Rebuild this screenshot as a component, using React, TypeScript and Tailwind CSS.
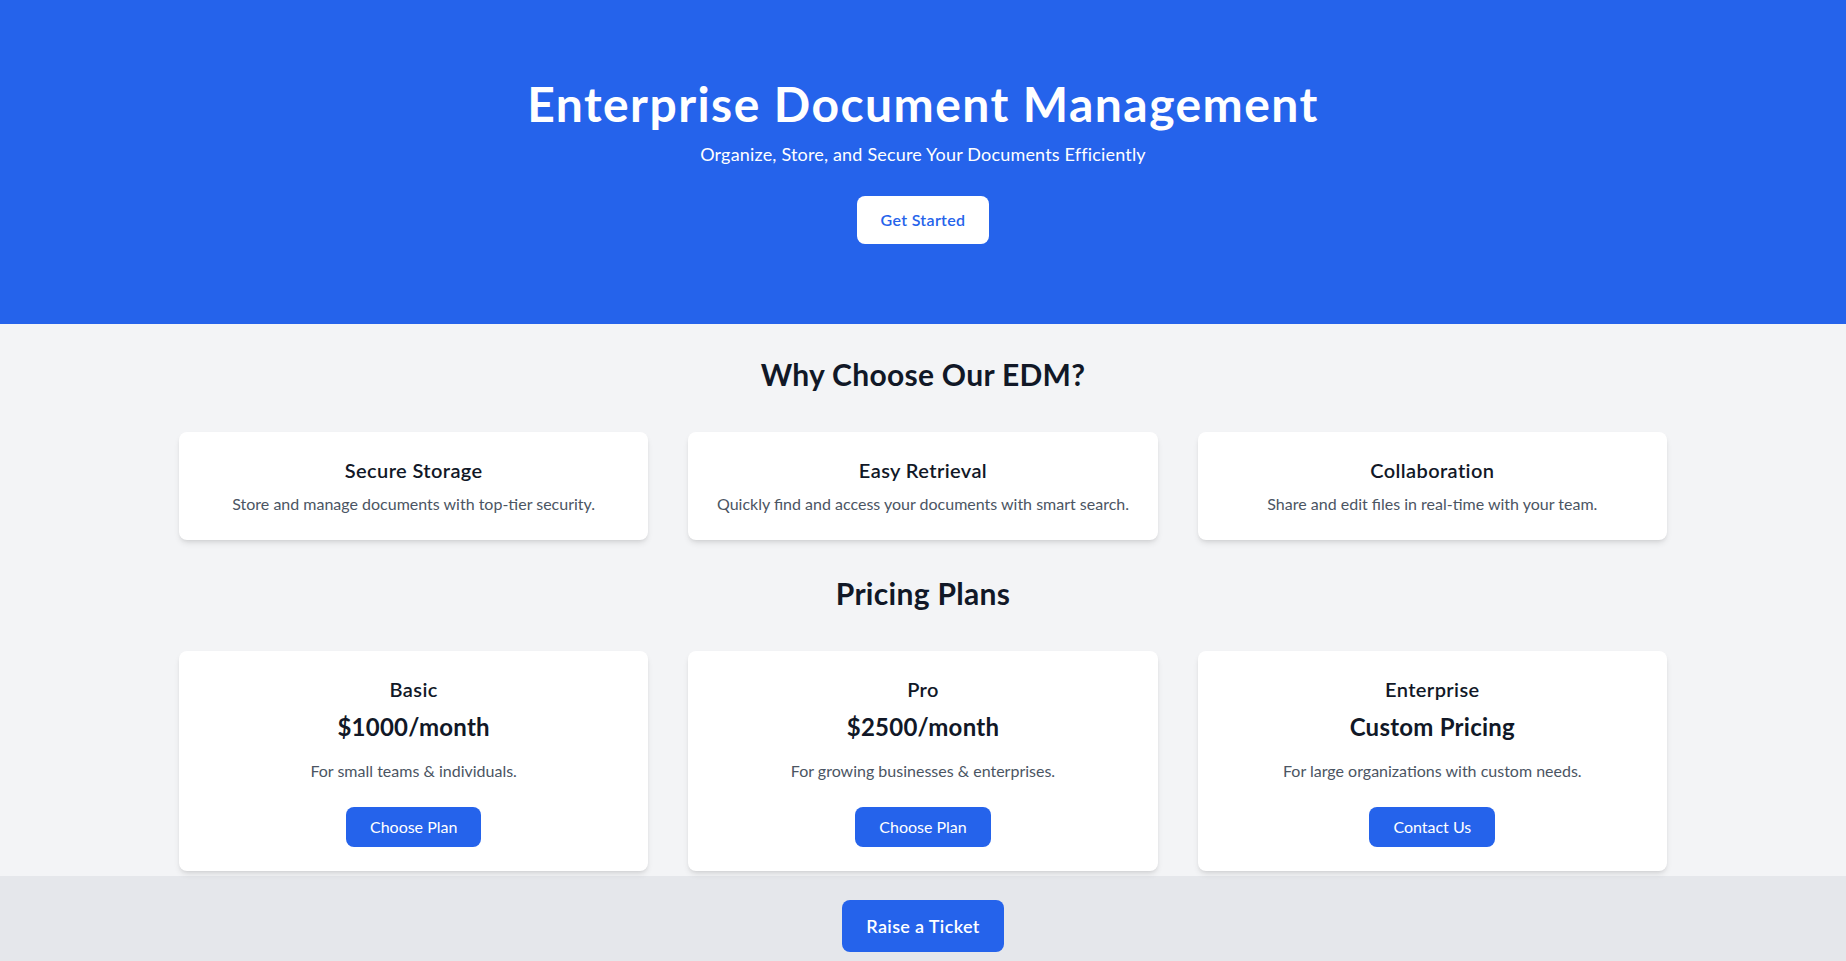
export default function App() {
  const features = [
    { title: "Secure Storage", desc: "Store and manage documents with top-tier security." },
    { title: "Easy Retrieval", desc: "Quickly find and access your documents with smart search." },
    { title: "Collaboration", desc: "Share and edit files in real-time with your team." },
  ];

  const plans = [
    { name: "Basic", price: "$1000/month", desc: "For small teams & individuals.", cta: "Choose Plan" },
    { name: "Pro", price: "$2500/month", desc: "For growing businesses & enterprises.", cta: "Choose Plan" },
    { name: "Enterprise", price: "Custom Pricing", desc: "For large organizations with custom needs.", cta: "Contact Us" },
  ];

  return (
    <div className="min-h-screen bg-[#f3f4f6] font-['Lato',sans-serif] text-[#111827]">
      {/* Hero */}
      <header className="bg-[#2563eb] text-white text-center pt-20 pb-20">
        <h1 className="text-5xl font-bold leading-[48px] tracking-[0.03em]">Enterprise Document Management</h1>
        <p className="mt-3 text-lg tracking-[0.01em]">Organize, Store, and Secure Your Documents Efficiently</p>
        <button className="mt-7 bg-white text-[#2563eb] font-semibold px-6 py-3 rounded-lg tracking-[0.02em]">
          Get Started
        </button>
      </header>

      {/* Features */}
      <section className="container mx-auto px-6 pt-8">
        <h2 className="text-3xl font-bold text-center mb-10 tracking-[0.01em]">Why Choose Our EDM?</h2>
        <div className="grid grid-cols-3 gap-10">
          {features.map((f) => (
            <div key={f.title} className="bg-white p-6 rounded-lg shadow-md text-center">
              <h3 className="text-xl font-semibold tracking-[0.02em]">{f.title}</h3>
              <p className="mt-2 text-[#4b5563] whitespace-nowrap">{f.desc}</p>
            </div>
          ))}
        </div>
      </section>

      {/* Pricing */}
      <section className="container mx-auto px-6 pt-[35px] pb-[5px]">
        <h2 className="text-3xl font-bold text-center mb-10 tracking-[0.01em]">Pricing Plans</h2>
        <div className="grid grid-cols-3 gap-10">
          {plans.map((p) => (
            <div key={p.name} className="bg-white p-6 rounded-lg shadow-md text-center">
              <h3 className="text-xl font-semibold tracking-[0.02em]">{p.name}</h3>
              <p className="mt-2 text-2xl font-bold tracking-[0.01em]">{p.price}</p>
              <p className="mt-4 text-[#4b5563]">{p.desc}</p>
              <button className="mt-6 bg-[#2563eb] text-white px-6 py-2 rounded-lg">{p.cta}</button>
            </div>
          ))}
        </div>
      </section>

      {/* Footer */}
      <footer className="bg-[#e5e7eb] py-6 text-center">
        <button className="bg-[#2563eb] text-white text-lg font-semibold px-6 py-3 rounded-lg tracking-[0.02em]">
          Raise a Ticket
        </button>
      </footer>
    </div>
  );
}
